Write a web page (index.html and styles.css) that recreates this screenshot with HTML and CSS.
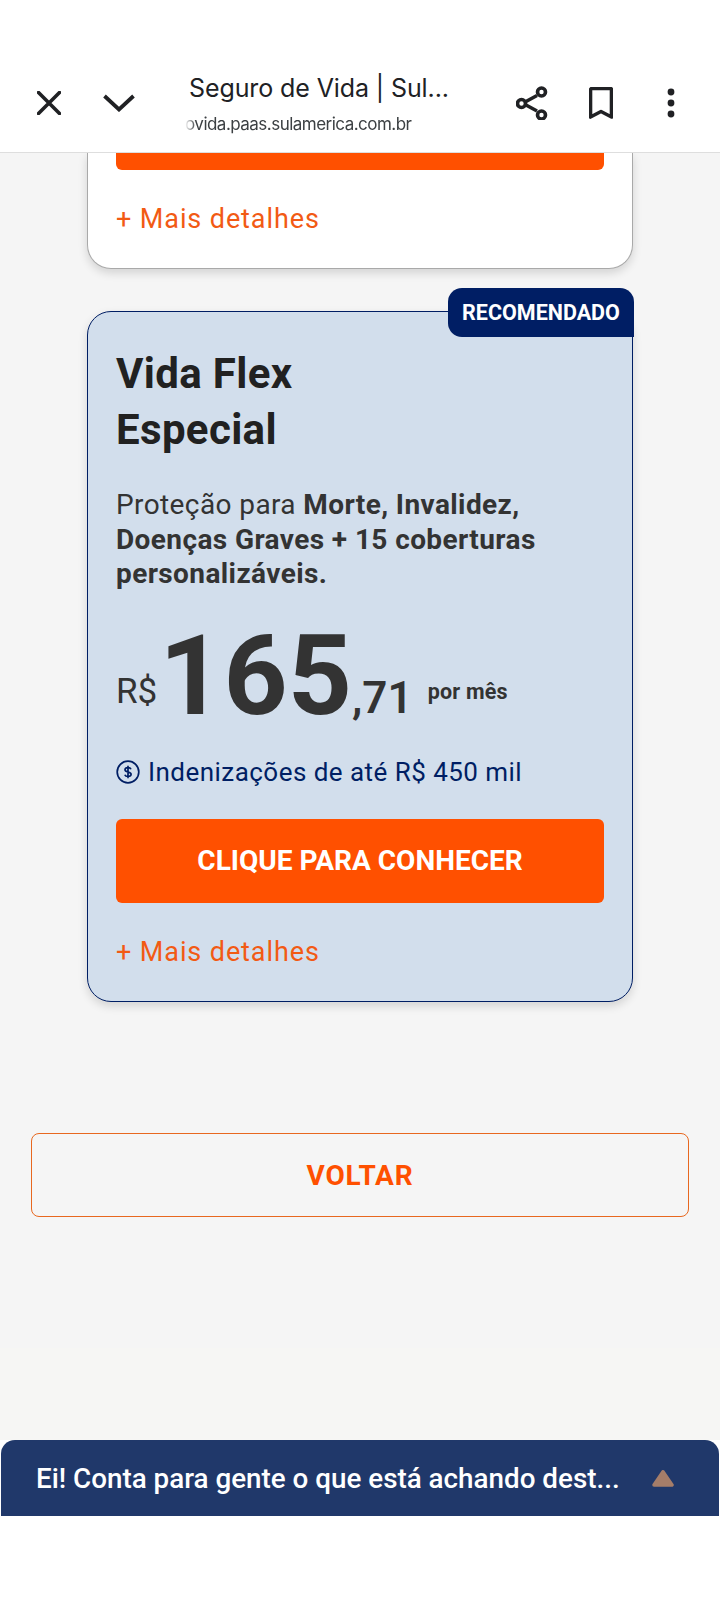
FILE: index.html
```html
<!DOCTYPE html>
<html lang="pt-BR">
<head>
<meta charset="utf-8">
<title>Seguro de Vida</title>
<link rel="stylesheet" href="styles.css">
</head>
<body>
<div class="app">
  <header class="topbar">
    <svg class="ic ic-close" viewBox="0 0 24 24"><path d="M1.500 1.500 22.500 22.500M22.500 1.500 1.500 22.500"/></svg>
    <svg class="ic ic-chev" viewBox="0 0 32 18"><path d="M1.500 2 16 15.500 30.500 2"/></svg>
    <div class="tab">
      <div class="tab-title">Seguro de Vida | Sul...</div>
      <div class="tab-url">ovida.paas.sulamerica.com.br</div>
    </div>
    <svg class="ic ic-share" viewBox="0 0 32 34"><path d="M21 9.500 10 15.500M10 19 21 25"/><circle cx="25.500" cy="6" r="4"/><circle cx="5.500" cy="17.500" r="4"/><circle cx="25.500" cy="29" r="4"/></svg>
    <svg class="ic ic-mark" viewBox="0 0 24 32"><path d="M1.500 30V3a1.500 1.500 0 0 1 1.500-1.500H21a1.500 1.500 0 0 1 1.500 1.500V30L12 24.500Z"/></svg>
    <svg class="ic-dots" viewBox="0 0 8 30"><circle cx="4" cy="4" r="3.400"/><circle cx="4" cy="15" r="3.400"/><circle cx="4" cy="26" r="3.400"/></svg>
  </header>

  <main class="page">
    <section class="card card-top">
      <div class="btn btn-clipped"></div>
      <a class="more">+ Mais detalhes</a>
    </section>

    <section class="card card-rec">
      <div class="badge">RECOMENDADO</div>
      <h2 class="plan">Vida Flex<br>Especial</h2>
      <p class="desc">Proteção para <b>Morte, Invalidez, Doenças Graves + 15 coberturas personalizáveis.</b></p>
      <div class="price">
        <span class="cur">R$</span>
        <span class="int">165</span>
        <span class="cents">,71</span>
        <span class="per">por mês</span>
      </div>
      <div class="benefit">
        <svg class="ic-coin" viewBox="0 0 24 24"><circle cx="12" cy="12" r="10.800"/><path d="M15 9.300c-.4-1-1.500-1.700-3-1.700-1.700 0-3 .9-3 2.200 0 3.100 6.100 1.500 6.100 4.500 0 1.300-1.300 2.200-3.100 2.200-1.600 0-2.800-.7-3.200-1.800M12 5.800v12.400"/></svg>
        <span>Indenizações de até R$ 450 mil</span>
      </div>
      <div class="btn btn-cta">CLIQUE PARA CONHECER</div>
      <a class="more more-rec">+ Mais detalhes</a>
    </section>

    <div class="back">VOLTAR</div>
  </main>

  <footer class="feedback">
    <span class="feedback-text">Ei! Conta para gente o que está achando dest...</span>
    <svg class="feedback-arrow" viewBox="0 0 22 17"><path d="M11 1.800 20 15H2Z"/></svg>
  </footer>
  <div class="bottom-space"></div>
</div>
</body>
</html>
```

FILE: styles.css
```css
* { box-sizing: border-box; }
html, body { margin: 0; padding: 0; }
body { background: #fff; font-family: Roboto, "Liberation Sans", sans-serif; }
.app { width: 720px; height: 1600px; display: flex; flex-direction: column; overflow: hidden; }

.topbar {
  height: 153px; flex: none; background: #fff; border-bottom: 1px solid #dedede;
  display: flex; align-items: center; padding-top: 53px; position: relative; z-index: 2;
}
.ic { fill: none; stroke: #202124; stroke-width: 3.600; flex: none; }
.ic-close { width: 24px; height: 24px; margin-left: 37px; stroke-linecap: round; }
.ic-chev { width: 32px; height: 18px; margin-left: 42px; margin-top: 1px; stroke-width: 3.800; }
.tab { width: 300px; margin-left: 54px; flex: none; padding-top: 3px; }
.tab-title { font-family: Inter, Roboto, sans-serif; font-size: 25px; line-height: 32px; color: #202124; letter-spacing: -0.1px; white-space: nowrap; }
.tab-url {
  font-family: Inter, Roboto, sans-serif; font-size: 17px; line-height: 24px; color: #3c4043;
  margin: 8px 0 0 -4px; white-space: nowrap; letter-spacing: -0.52px;
  -webkit-mask-image: linear-gradient(to right, transparent 0, #000 11px);
  mask-image: linear-gradient(to right, transparent 0, #000 11px);
}
.ic-share { width: 32px; height: 34px; margin-left: 27px; }
.ic-mark { width: 24px; height: 32px; margin-left: 41px; stroke-linejoin: round; }
.ic-dots { width: 8px; height: 30px; margin-left: 54px; fill: #202124; flex: none; }

.page { flex: 1; background: linear-gradient(#f5f5f5 1195px, #f6f6f4 1195px); display: flex; flex-direction: column; }
.card { width: 546px; margin-left: 87px; padding: 0 28px; box-shadow: 0 4px 10px rgba(0,0,0,.14); }
.card-top { height: 116px; background: #fff; border: 1px solid #a9a9a9; border-top: 0; border-radius: 0 0 24px 24px; }
.btn { background: #ff5000; color: #fff; }
.btn-clipped { height: 17px; border-radius: 0 0 6px 6px; }
.more { display: block; color: #f25a14; font-size: 27px; line-height: 34px; letter-spacing: .9px; }
.card-top .more { margin-top: 32px; }

.card-rec { position: relative; margin-top: 42px; background: #d2deec; border: 1px solid #001e64; border-radius: 24px; padding-top: 34px; padding-bottom: 32px; }
.badge {
  position: absolute; top: -24px; right: -2px; width: 186px; height: 49px;
  background: #001e64; color: #fff; border-radius: 14px 14px 0 14px;
  font-size: 21.500px; font-weight: 700; line-height: 49px; text-align: center;
}
.plan { margin: 0; font-size: 42px; line-height: 56px; font-weight: 700; color: #212121; letter-spacing: .35px; }
.desc { margin: 30px 0 0; font-size: 28px; line-height: 34.500px; color: #333; letter-spacing: .4px; }
.desc b { font-weight: 700; }
.price { display: flex; align-items: flex-start; height: 112px; margin-top: 27px; color: #333; }
.cur { font-size: 35px; line-height: 34px; margin-top: 56px; }
.int { font-size: 112px; line-height: 112px; font-weight: 700; margin: 1px 0 0 2px; }
.cents { font-size: 44px; line-height: 44px; font-weight: 600; margin-top: 57px; }
.per { font-size: 21.500px; line-height: 20px; font-weight: 700; letter-spacing: .2px; margin-top: 63px; margin-left: 15px; }
.benefit { display: flex; align-items: center; gap: 8px; margin-top: 24px; color: #001e64; font-size: 26px; line-height: 34px; letter-spacing: .46px; }
.ic-coin { width: 24px; height: 24px; fill: none; stroke: #001e64; stroke-width: 1.700; flex: none; }
.btn-cta { height: 84px; margin-top: 30px; border-radius: 6px; font-size: 28px; font-weight: 700; line-height: 84px; text-align: center; }
.more-rec { margin-top: 32px; }

.back { width: 658px; height: 84px; margin: 131px 0 0 31px; border: 1px solid #e8681f; border-radius: 8px; color: #ff5000; font-size: 28px; font-weight: 700; line-height: 84px; text-align: center; letter-spacing: .8px; }

.feedback { height: 76px; flex: none; margin: 0 1px; background: #20386a; border-radius: 14px 14px 0 0; display: flex; align-items: center; padding: 0 45px 0 35px; justify-content: space-between; }
.feedback-text { color: #fff; font-size: 27.800px; font-weight: 500; white-space: nowrap; }
.feedback-arrow { width: 22px; height: 17px; fill: #a57d69; stroke: #a57d69; stroke-width: 3.500; stroke-linejoin: round; }
.bottom-space { height: 84px; flex: none; background: #fff; }
```
